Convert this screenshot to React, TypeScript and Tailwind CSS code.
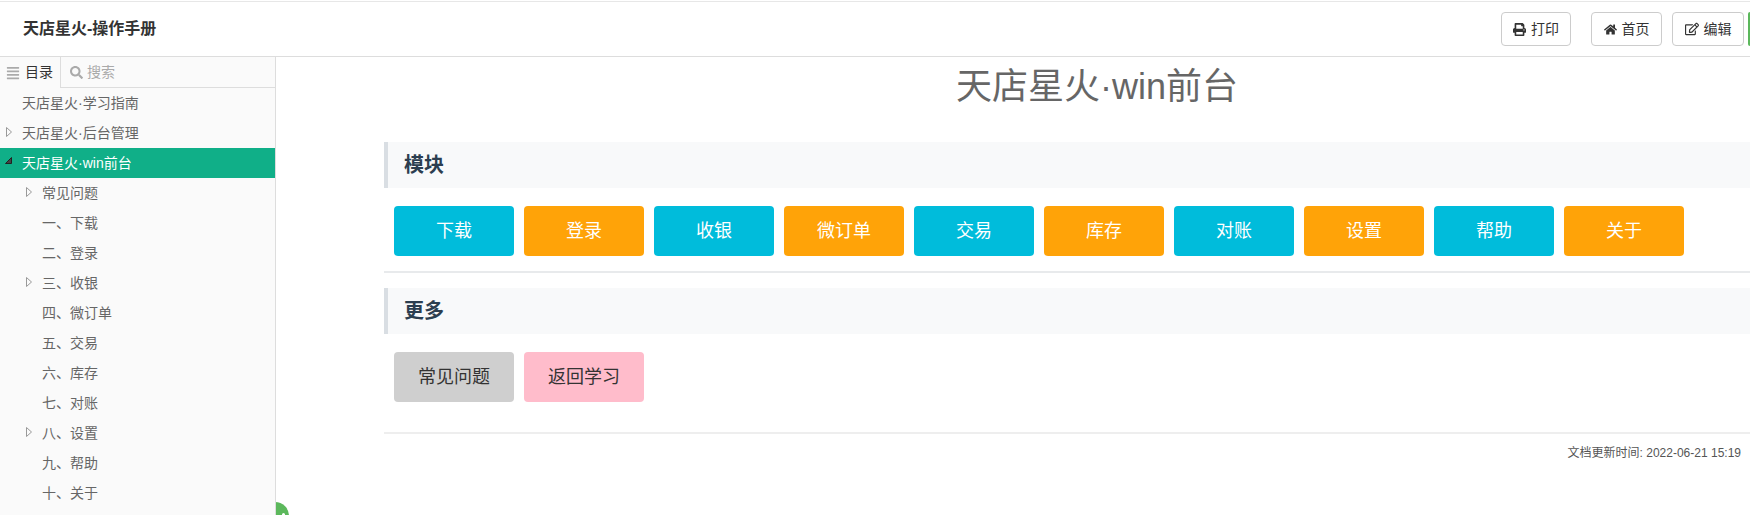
import { FaAlignJustify, FaSearch, FaPrint, FaHome, FaRegEdit } from "react-icons/fa";

const font = { fontFamily: '"Liberation Sans", "Noto Sans CJK SC", sans-serif' };

function Arrow({ open }: { open?: boolean }) {
  if (open) {
    return (
      <svg className="absolute left-[5px] top-[9px]" width="7" height="7" viewBox="0 0 7 7">
        <path d="M0.5 6.5 L6.5 0.5 L6.5 6.5 Z" fill="#444" stroke="#222" strokeWidth="1" />
      </svg>
    );
  }
  return (
    <svg className="absolute top-[9px]" style={{ left: 0 }} width="6" height="10" viewBox="0 0 6 10">
      <path d="M0.5 0.5 L5.5 5 L0.5 9.5 Z" fill="none" stroke="#999" strokeWidth="1" />
    </svg>
  );
}

function Row({ label, indent, arrow, active }: { label: string; indent?: boolean; arrow?: boolean; active?: boolean }) {
  return (
    <div
      className={`h-[30px] flex items-center text-[14px] whitespace-nowrap ${indent ? "pl-[42px]" : "pl-[22px]"} ${
        active ? "bg-[#10af88] text-white" : "text-[#666]"
      } relative`}
    >
      {active ? (
        <Arrow open />
      ) : arrow ? (
        <span className={`absolute top-0 h-full ${indent ? "left-[26px]" : "left-[6px]"}`}>
          <Arrow />
        </span>
      ) : null}
      {label}
    </div>
  );
}

function HeadBtn({ icon, label, className }: { icon: React.ReactNode; label: string; className: string }) {
  return (
    <div
      className={`h-[34px] flex items-center justify-center gap-[5px] border border-[#ccc] rounded-[4px] bg-white text-[14px] text-[#333] shrink-0 ${className}`}
    >
      {icon}
      {label}
    </div>
  );
}

function Heading({ children }: { children: React.ReactNode }) {
  return (
    <h2 className="h-[46px] flex items-center bg-[#f8f9fa] border-l-4 border-[#d9dee3] pl-[16px] text-[20px] leading-none font-bold text-[#2c3e50]">
      {children}
    </h2>
  );
}

function Btn({ label, className }: { label: string; className: string }) {
  return (
    <div className={`w-[120px] h-[50px] flex items-center justify-center rounded-[4px] text-[18px] ${className}`}>
      {label}
    </div>
  );
}

const rows: { label: string; indent?: boolean; arrow?: boolean; active?: boolean }[] = [
  { label: "天店星火·学习指南" },
  { label: "天店星火·后台管理", arrow: true },
  { label: "天店星火·win前台", active: true },
  { label: "常见问题", indent: true, arrow: true },
  { label: "一、下载", indent: true },
  { label: "二、登录", indent: true },
  { label: "三、收银", indent: true, arrow: true },
  { label: "四、微订单", indent: true },
  { label: "五、交易", indent: true },
  { label: "六、库存", indent: true },
  { label: "七、对账", indent: true },
  { label: "八、设置", indent: true, arrow: true },
  { label: "九、帮助", indent: true },
  { label: "十、关于", indent: true },
];

const modules = ["下载", "登录", "收银", "微订单", "交易", "库存", "对账", "设置", "帮助", "关于"];

export default function App() {
  return (
    <div className="w-[1750px] h-[515px] overflow-hidden bg-white relative flex flex-col" style={font}>
      <header className="h-[56px] shrink-0 border-t border-b border-t-[#e7e7e7] border-b-[#ddd] mt-px flex items-center justify-between overflow-hidden">
        <div className="pl-[23px] text-[16px] font-bold text-[#333]">天店星火-操作手册</div>
        <div className="flex items-center">
          <HeadBtn className="w-[70px] mr-[20px]" icon={<FaPrint className="text-[13px]" />} label="打印" />
          <HeadBtn className="w-[71px] mr-[10px]" icon={<FaHome className="text-[13px]" />} label="首页" />
          <HeadBtn className="w-[72px] mr-[4px]" icon={<FaRegEdit className="text-[14px]" />} label="编辑" />
          <div className="w-[2px] h-[34px] bg-[#5cb85c] rounded-l-[4px]" />
        </div>
      </header>
      <div className="flex flex-1 min-h-0">
        <aside className="w-[276px] shrink-0 bg-[#fafafa] border-r border-[#ddd] overflow-hidden relative z-10">
          <div className="h-[31px] flex border-b border-[#ddd] text-[14px]">
            <div className="w-[61px] -mb-px h-[31px] bg-[#fafafa] border-r border-[#ddd] flex items-center pl-[6px] gap-[5px] text-[#333]">
              <FaAlignJustify className="text-[14px] text-[#aaa]" />
              目录
            </div>
            <div className="flex-1 flex items-center pl-[9px] gap-[4px] text-[#aaa]">
              <FaSearch className="text-[13px]" />
              搜索
            </div>
          </div>
          {rows.map((r) => (
            <Row key={r.label} {...r} />
          ))}
        </aside>
        <main className="flex-1 min-w-0 overflow-hidden pl-[108px]">
          <div className="w-[1426px]">
            <h1 className="h-[85px] flex items-center justify-center text-[36px] font-normal text-[#666] pb-[30px] pt-[5px]">
              天店星火·win前台
            </h1>
            <Heading>模块</Heading>
            <div className="flex gap-[10px] pl-[10px] pt-[18px] pb-[15px] border-b-2 border-[#e8eaec]">
              {modules.map((m, i) => (
                <Btn key={m} label={m} className={`text-white ${i % 2 ? "bg-[#ffa308]" : "bg-[#00bcdb]"}`} />
              ))}
            </div>
            <div className="mt-[15px]">
              <Heading>更多</Heading>
            </div>
            <div className="flex gap-[10px] pl-[10px] pt-[18px] pb-[30px] border-b-2 border-[#eee]">
              <Btn label="常见问题" className="bg-[#cfcfcf] text-[#333]" />
              <Btn label="返回学习" className="bg-[#ffbccb] text-[#333]" />
            </div>
            <div className="text-[12px] text-[#555] text-right pr-[69px] pt-[10px]">文档更新时间: 2022-06-21 15:19</div>
          </div>
        </main>
      </div>
      <div className="absolute left-[261px] top-[502px] w-[28px] h-[28px] rounded-full bg-[#5cb85c]">
        <div className="absolute left-[21px] top-[11px] w-[3px] h-[3px] rounded-full bg-white" />
      </div>
    </div>
  );
}
